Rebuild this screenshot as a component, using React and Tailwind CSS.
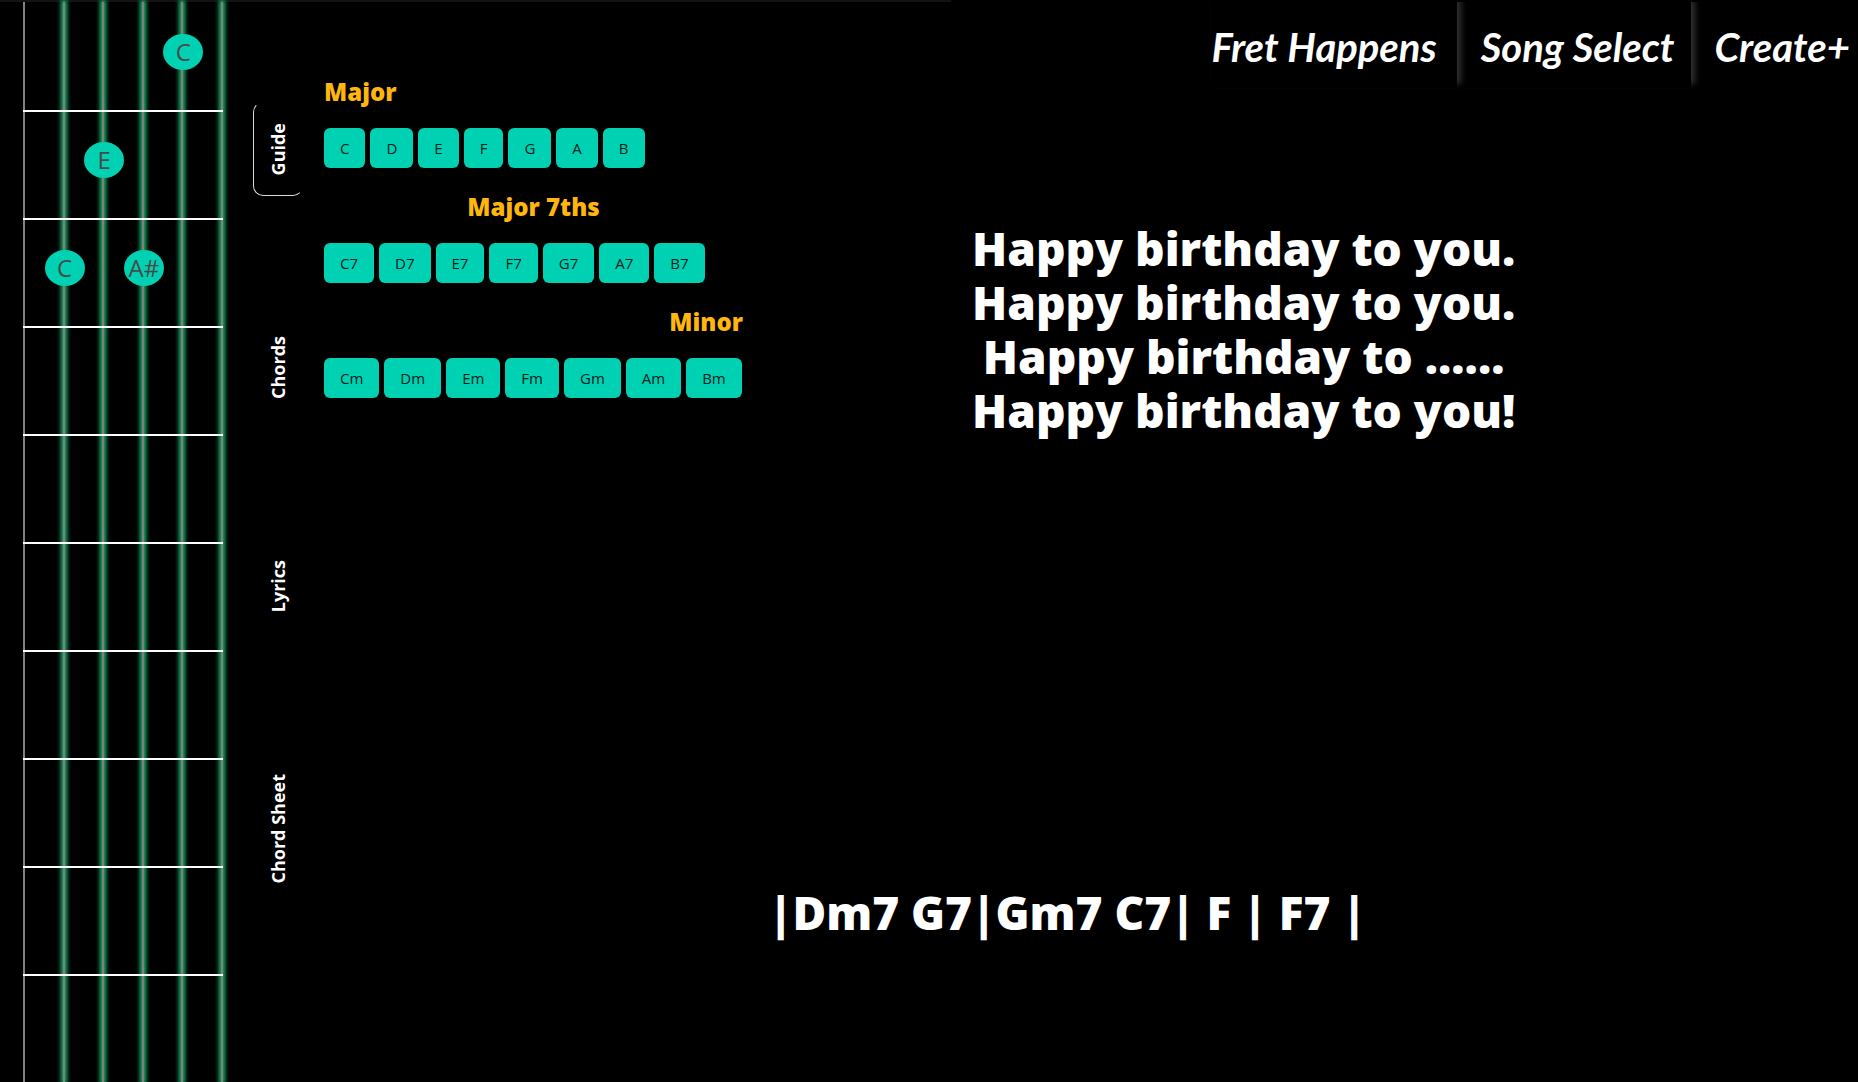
const NOTES = [
  { fret: 0, string: 3, label: "C" },
  { fret: 1, string: 1, label: "E" },
  { fret: 2, string: 0, label: "C" },
  { fret: 2, string: 2, label: "A#" },
];

const CHORDS = [
  { title: "Major", align: "text-left", names: ["C", "D", "E", "F", "G", "A", "B"] },
  { title: "Major 7ths", align: "text-center", names: ["C7", "D7", "E7", "F7", "G7", "A7", "B7"] },
  { title: "Minor", align: "text-right", names: ["Cm", "Dm", "Em", "Fm", "Gm", "Am", "Bm"] },
];

const TABS = ["Guide", "Chords", "Lyrics", "Chord Sheet"];

const LINKS = [
  { label: "Fret Happens", style: "pr-5 shadow-[4px_-4px_6px_0px_#303030]" },
  { label: "Song Select", style: "pr-4 pl-6 shadow-[4px_-4px_6px_0px_#303030]" },
  { label: "Create+", style: "pr-2 pl-6" },
];

function Fretboard() {
  return (
    <section aria-label="Fretboard" className="relative ml-[23px] w-[200px] shrink-0 border-l-2 border-[#808080]">
      <div className="absolute inset-0 grid grid-cols-5">
        {[0, 1, 2, 3, 4].map((s) => (
          <div key={s} className="flex justify-end">
            <div className="w-[2px] bg-[#808080] shadow-[0_0_4px_2px_#1fb870]" />
          </div>
        ))}
      </div>
      <div className="relative grid h-full grid-rows-10">
        {Array.from({ length: 10 }, (_, fret) => (
          <div key={fret} className="relative grid grid-cols-5">
            {fret > 0 && <div className="absolute -left-[2px] right-0 top-0 h-[2px] bg-white" />}
            {[0, 1, 2, 3, 4].map((s) => {
              const note = NOTES.find((n) => n.fret === fret && n.string === s);
              return (
                <div key={s} className="relative">
                  {note && (
                    <span className="absolute -right-5 top-8 flex h-9 w-10 items-center justify-center rounded-[50%] bg-[#00d1b2] text-2xl text-[#4a4a4a]">
                      {note.label}
                    </span>
                  )}
                </div>
              );
            })}
          </div>
        ))}
      </div>
    </section>
  );
}

function Tabs() {
  return (
    <div role="tablist" aria-orientation="vertical" className="ml-[30px] flex w-[50px] shrink-0 flex-col gap-[119px] pt-[100px]">
      {TABS.map((t, i) => (
        <button
          key={t}
          role="tab"
          aria-selected={i === 0}
          className={
            "flex w-[50px] items-center justify-center rounded-[10px] border py-5 text-lg font-bold text-white " +
            (i === 0 ? "border-t-transparent border-r-transparent border-b-[#dbdbdb] border-l-[#dbdbdb]" : "border-transparent")
          }
        >
          <span className="rotate-180 [writing-mode:vertical-rl]">{t}</span>
        </button>
      ))}
    </div>
  );
}

function Guide() {
  return (
    <section className="ml-[21px] flex w-max min-w-[419px] shrink-0 flex-col gap-[19px] pt-[70px]">
      {CHORDS.map((g) => (
        <div key={g.title} className="flex flex-col gap-4">
          <h2 className={"h-10 text-2xl leading-10 font-black text-[#ffb70f] " + g.align}>{g.title}</h2>
          <div className="flex gap-[5px]">
            {g.names.map((n) => (
              <button key={n} className="h-10 rounded-md bg-[#00d1b2] px-4 text-[15px] font-medium text-[#00211c]">
                {n}
              </button>
            ))}
          </div>
        </div>
      ))}
    </section>
  );
}

export default function App() {
  return (
    <div className="flex h-screen flex-col overflow-hidden bg-black font-['Open_Sans','Noto_Sans',sans-serif]">
      <div className="h-[2px] w-[951px] shrink-0 bg-[#121212]" />
      <div className="flex min-h-0 flex-1">
        <Fretboard />
        <Tabs />
        <Guide />
        <main className="flex min-w-0 flex-1 flex-col text-[46px] leading-[54px] font-black text-white">
          <nav className="flex justify-end overflow-hidden font-['Lato',sans-serif] font-bold italic">
            {LINKS.map((l) => (
              <a key={l.label} href="#" className={"mb-2 flex h-[86px] items-center pt-1 text-[40px] whitespace-nowrap " + l.style}>
                {l.label}
              </a>
            ))}
          </nav>
          <p className="mt-[125px] ml-[229px] w-max text-center">
            Happy birthday to you.
            <br />
            Happy birthday to you.
            <br />
            Happy birthday to ......
            <br />
            Happy birthday to you!
          </p>
          <p className="mt-auto mb-[143px] ml-[26px] whitespace-nowrap">|Dm7 G7|Gm7 C7| F | F7 |</p>
        </main>
      </div>
    </div>
  );
}
